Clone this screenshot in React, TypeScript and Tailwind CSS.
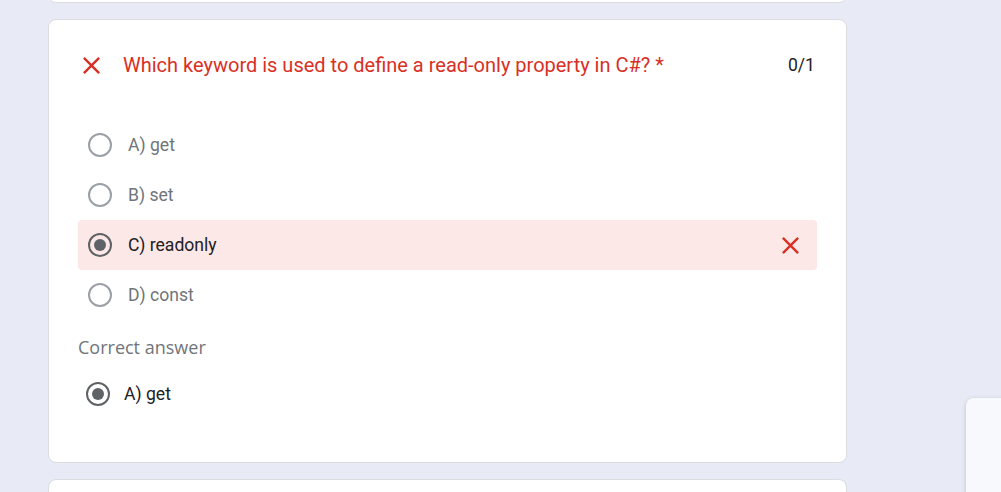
import React from "react";

const Radio = ({ checked }: { checked?: boolean }) => (
  <div
    className={`w-[24px] h-[24px] rounded-full border-2 flex items-center justify-center shrink-0 ${
      checked ? "border-[#5f6368]" : "border-[#9aa0a6]"
    }`}
  >
    {checked && <div className="w-[12px] h-[12px] rounded-full bg-[#5f6368]" />}
  </div>
);

const XIcon = ({ className }: { className?: string }) => (
  <svg viewBox="0 0 24 24" className={className} fill="#d93025">
    <path d="M19 6.41L17.59 5 12 10.59 6.41 5 5 6.41 10.59 12 5 17.59 6.41 19 12 13.41 17.59 19 19 17.59 13.41 12z" />
  </svg>
);

const Option = ({ label, checked, wrong }: { label: string; checked?: boolean; wrong?: boolean }) => (
  <div
    className={`h-[50px] flex items-center pl-[10px] pr-[12px] rounded-[4px] ${wrong ? "bg-[#fce8e6]" : ""}`}
  >
    <Radio checked={checked} />
    <span className={`ml-[16px] text-[17.6px] ${checked ? "text-[#202124]" : "text-[#70757a]"}`}>{label}</span>
    {wrong && <XIcon className="ml-auto w-[29px] h-[29px]" />}
  </div>
);

export default function App() {
  return (
    <div
      className="relative w-[1001px] h-[492px] overflow-hidden bg-[#e8ebf6]"
      style={{ fontFamily: "Roboto, 'Liberation Sans', sans-serif" }}
    >
      <div className="pl-[48px] w-[847px] flex flex-col gap-[16px] mt-[-40px]">
        <div className="h-[43px] bg-white rounded-[8px] border border-[#dadce0]" />
        <div className="bg-white rounded-[8px] border border-[#dadce0] pt-[30px] pb-[48px] px-[29px]">
          <div className="flex items-center pr-[2px]">
            <XIcon className="w-[29px] h-[29px] mr-[17px] ml-[-1px]" />
            <span className="text-[20px] text-[#d93025]">Which keyword is used to define a read-only property in C#? *</span>
            <span className="ml-auto text-[17.6px] text-[#202124]">0/1</span>
          </div>
          <div className="mt-[40px] flex flex-col">
            <Option label="A) get" />
            <Option label="B) set" />
            <Option label="C) readonly" checked wrong />
            <Option label="D) const" />
          </div>
          <div
            className="mt-[14px] text-[18px] font-medium text-[#70757a] leading-[26px]"
            style={{ fontFamily: "'Open Sans', sans-serif" }}
          >
            Correct answer
          </div>
          <div className="mt-[14px] h-[40px] flex items-center pl-[8px]">
            <Radio checked />
            <span className="ml-[14px] text-[17.6px] text-[#202124]">A) get</span>
          </div>
        </div>
        <div className="h-[40px] bg-white rounded-[8px] border border-[#dadce0]" />
      </div>
      <div className="absolute left-[966px] top-[398px] w-[60px] h-[120px] bg-[#f8f9fd] rounded-tl-[8px] shadow-[0_1px_4px_rgba(60,64,67,0.25)]" />
    </div>
  );
}
